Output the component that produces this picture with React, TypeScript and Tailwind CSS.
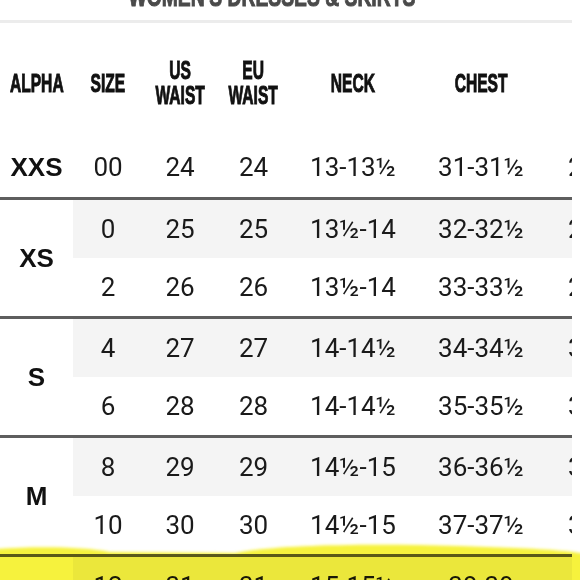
import React from "react";

const cols = "grid-cols-[73px_70px_74px_73px_126px_130px_130px]";

type Group = { alpha: string; rows: string[][] };

const groups: Group[] = [
  {
    alpha: "XS",
    rows: [
      ["0", "25", "25", "13½-14", "32-32½", "25-25½"],
      ["2", "26", "26", "13½-14", "33-33½", "26-26½"],
    ],
  },
  {
    alpha: "S",
    rows: [
      ["4", "27", "27", "14-14½", "34-34½", "35-35½"],
      ["6", "28", "28", "14-14½", "35-35½", "36-36½"],
    ],
  },
  {
    alpha: "M",
    rows: [
      ["8", "29", "29", "14½-15", "36-36½", "37-37½"],
      ["10", "30", "30", "14½-15", "37-37½", "38-38½"],
    ],
  },
  {
    alpha: "L",
    rows: [
      ["12", "31", "31", "15-15½", "38-39", "6-6½"],
      ["14", "32", "32", "15½-16", "40-41", "6½-7"],
    ],
  },
];

const headFont = { fontFamily: '"Liberation Sans", Arial, sans-serif' };
const dataFont = { fontFamily: 'Roboto, "Liberation Sans", sans-serif' };

function Head({ children }: { children: React.ReactNode }) {
  return (
    <div className="flex h-[114px] items-center justify-center pt-[6px] text-center">
      <span
        className="inline-block origin-center scale-x-[0.6] text-[26px] font-bold leading-[25px] text-[#111] [-webkit-text-stroke:1px_#111]"
        style={headFont}
      >
        {children}
      </span>
    </div>
  );
}

function Cell({ v, gray, h }: { v: string; gray: boolean; h: string }) {
  return (
    <div
      className={`flex items-center justify-center whitespace-nowrap text-[26px] text-[#1a1a1a] ${h} ${
        gray ? "bg-[#f4f4f4]" : "bg-white"
      }`}
      style={dataFont}
    >
      {v}
    </div>
  );
}

function Line() {
  return <div className="col-span-7 h-[3px] bg-[#5e5e5e]" />;
}

export default function App() {
  return (
    <div className="relative h-[580px] w-[580px] overflow-hidden bg-white">
      {/* Title (mostly scrolled off) */}
      <div className="h-[20px] w-[572px] overflow-hidden">
        <div className="-mt-[17px] flex justify-center pr-[28px]">
          <span
            className="inline-block origin-center scale-x-[0.69] whitespace-nowrap text-[28px] font-bold leading-[28px] text-[#4a4a4a] blur-[0.6px] [-webkit-text-stroke:1px_#4a4a4a]"
            style={headFont}
          >
            WOMEN'S DRESSES &amp; SKIRTS
          </span>
        </div>
      </div>
      <div className="h-[3px] w-[572px] bg-[#ececec]" />

      <div className="w-[572px] overflow-hidden">
        <div className={`grid w-[676px] ${cols}`}>
          <Head>ALPHA</Head>
          <Head>SIZE</Head>
          <Head>
            US
            <br />
            WAIST
          </Head>
          <Head>
            EU
            <br />
            WAIST
          </Head>
          <Head>NECK</Head>
          <Head>CHEST</Head>
          <Head>HIPS</Head>

          {/* XXS */}
          <div
            className="flex h-[60px] items-center justify-center text-[26px] font-bold text-[#111]"
            style={headFont}
          >
            XXS
          </div>
          {["00", "24", "24", "13-13½", "31-31½", "24-24½"].map((v, i) => (
            <Cell key={i} v={v} gray={false} h="h-[60px]" />
          ))}

          {groups.map((g) => (
            <React.Fragment key={g.alpha}>
              <Line />
              <div
                className="row-span-2 flex items-center justify-center bg-white text-[26px] font-bold text-[#111]"
                style={headFont}
              >
                {g.alpha}
              </div>
              {g.rows[0].map((v, i) => (
                <Cell key={"a" + i} v={v} gray h="h-[58px]" />
              ))}
              {g.rows[1].map((v, i) => (
                <Cell key={"b" + i} v={v} gray={false} h="h-[58px]" />
              ))}
            </React.Fragment>
          ))}
        </div>
      </div>

      {/* highlighter mark */}
      <svg
        className="pointer-events-none absolute left-0 top-[530px] mix-blend-multiply"
        width="580"
        height="50"
        viewBox="0 530 580 50"
      >
        <defs>
          <filter id="soft" x="-5%" y="-20%" width="110%" height="140%">
            <feGaussianBlur stdDeviation="1.6" />
          </filter>
        </defs>
        <path
          d="M-5,549 C40,546 85,547 110,552 L235,553 C270,546 350,543 460,546 C510,548 560,549 585,554 L585,585 L-5,585 Z"
          fill="#f6f23c"
          filter="url(#soft)"
        />
      </svg>
    </div>
  );
}
